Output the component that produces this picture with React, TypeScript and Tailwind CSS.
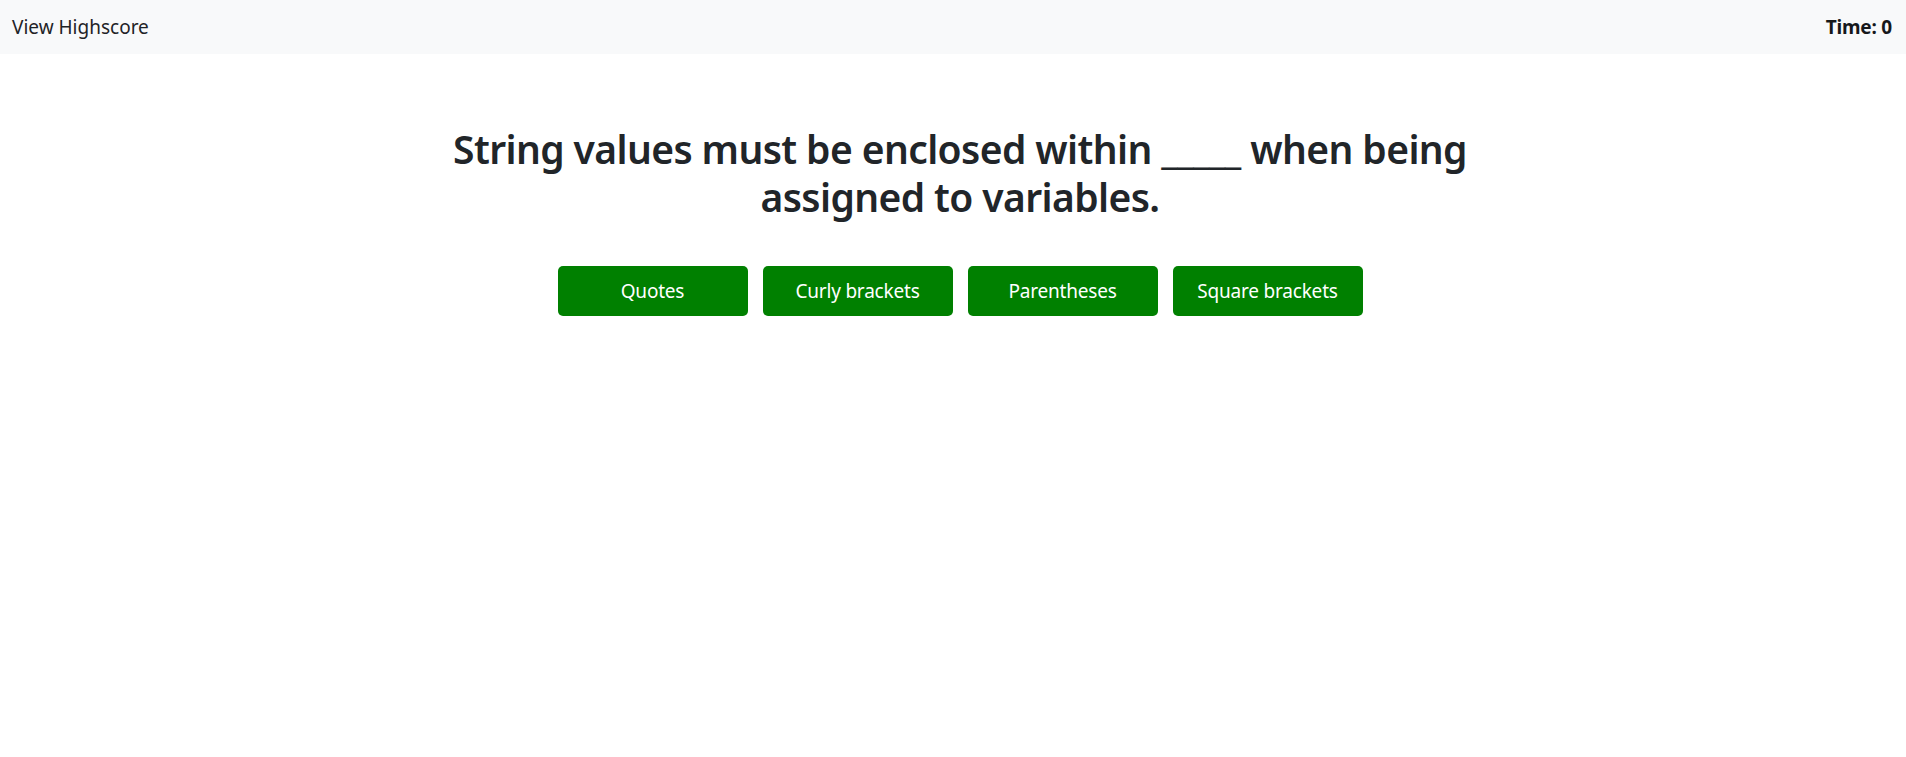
import React from "react";

export default function App() {
  const answers = ["Quotes", "Curly brackets", "Parentheses", "Square brackets"];
  return (
    <div
      className="min-h-screen bg-white text-[#212529]"
      style={{ fontFamily: '"Noto Sans", "Open Sans", sans-serif' }}
    >
      <nav className="flex h-[54px] items-center justify-between bg-[#f8f9fa] pl-[12px] pr-[14px]">
        <span className="text-[19px] text-[#1f2326]">View Highscore</span>
        <span className="text-[19px] font-bold tracking-[-0.2px] text-[#16181b]">Time: 0</span>
      </nav>
      <main className="flex flex-col items-center pl-[14px] pt-[71px]">
        <h1 className="w-[1100px] text-center text-[39px] font-semibold leading-[48px] tracking-[-0.6px] text-[#212529]">
          String values must be enclosed within _____ when being assigned to variables.
        </h1>
        <div className="mt-[45px] flex gap-[15px]">
          {answers.map((a) => (
            <button
              key={a}
              className="h-[50px] w-[190px] rounded-[5px] bg-[#008000] text-[19px] tracking-[-0.2px] text-white"
            >
              {a}
            </button>
          ))}
        </div>
      </main>
    </div>
  );
}
